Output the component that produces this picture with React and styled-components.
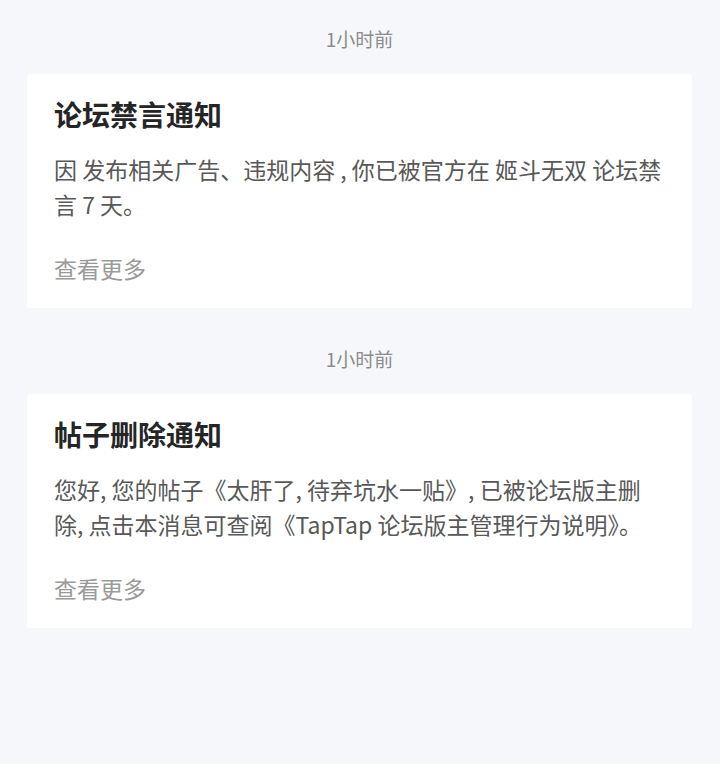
import styled, { createGlobalStyle } from 'styled-components';

const GlobalStyle = createGlobalStyle`
  html, body {
    margin: 0;
    padding: 0;
    background: #f5f7fa;
  }
  body {
    font-family: "Noto Sans CJK SC", "Noto Sans", sans-serif;
  }
`;

const Page = styled.div`
  min-height: 764px;
  background: #f5f7fa;
  padding: 24px 28px 0 27px;
  box-sizing: border-box;
  display: flex;
  flex-direction: column;
  gap: 36px;
`;

const Group = styled.section`
  display: flex;
  flex-direction: column;
  gap: 20px;
`;

const Time = styled.div`
  text-align: center;
  font-size: 19px;
  line-height: 30px;
  color: #8c8c8c;
`;

const Card = styled.div`
  background: #fff;
  border-radius: 3px;
  padding: 20px 30px 22px 27px;
  display: flex;
  flex-direction: column;
`;

const Title = styled.h2`
  margin: 0;
  font-size: 28px;
  line-height: 40px;
  font-weight: 700;
  color: #252525;
`;

const Body = styled.p`
  margin: 18px 0 0;
  font-size: 23px;
  line-height: 35px;
  color: #585858;
`;

const More = styled.span`
  margin-top: 29px;
  font-size: 23px;
  line-height: 35px;
  color: #9a9a9a;
`;

const notices = [
  {
    id: 1,
    time: '1小时前',
    title: '论坛禁言通知',
    body: '因 发布相关广告、违规内容 , 你已被官方在 姬斗无双 论坛禁言 7 天。',
  },
  {
    id: 2,
    time: '1小时前',
    title: '帖子删除通知',
    body: '您好, 您的帖子《太肝了, 待弃坑水一贴》, 已被论坛版主删除, 点击本消息可查阅《TapTap 论坛版主管理行为说明》。',
  },
];

const App = () => {
  return (
    <>
      <GlobalStyle />
      <Page>
        {notices.map((n) => (
          <Group key={n.id}>
            <Time>{n.time}</Time>
            <Card>
              <Title>{n.title}</Title>
              <Body>{n.body}</Body>
              <More>查看更多</More>
            </Card>
          </Group>
        ))}
      </Page>
    </>
  );
};

export default App;
